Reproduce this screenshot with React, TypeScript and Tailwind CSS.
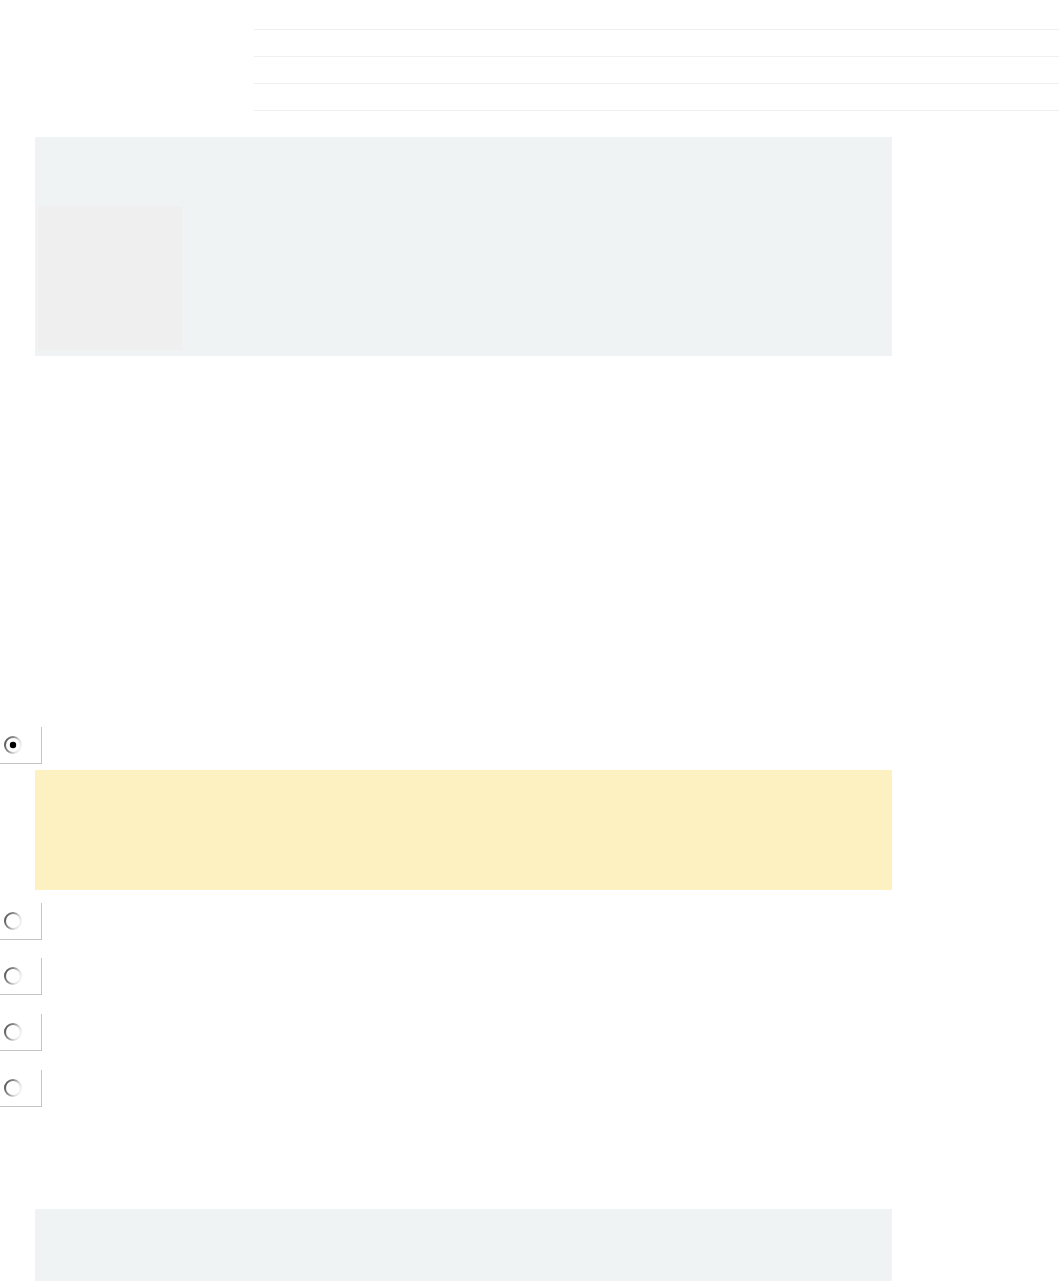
import React from "react";

function Radio({ checked, id }: { checked?: boolean; id: string }) {
  return (
    <svg width="20" height="20" viewBox="0 0 20 20" className="block">
      <defs>
        <linearGradient id={id} x1="0" y1="0.2" x2="1" y2="0.6">
          <stop offset="0" stopColor="#555555" />
          <stop offset="0.4" stopColor="#8c8c8c" />
          <stop offset="0.75" stopColor="#d8d8d8" />
          <stop offset="1" stopColor="#f2f2f2" />
        </linearGradient>
      </defs>
      <circle cx="10" cy="10" r="8" fill="#ffffff" stroke={`url(#${id})`} strokeWidth="2" />
      {checked && <circle cx="10" cy="10" r="3.2" fill="#000000" />}
    </svg>
  );
}

function RadioBox({ checked, id, className }: { checked?: boolean; id: string; className?: string }) {
  return (
    <div className={`w-[42px] h-[37px] border-r border-b border-[#c4c4c4] flex items-center pl-[3px] ${className ?? ""}`}>
      <Radio checked={checked} id={id} />
    </div>
  );
}

export default function App() {
  return (
    <div className="w-[1059px] h-[1281px] bg-white overflow-hidden font-['Liberation_Sans',sans-serif]">
      <div className="pt-[29px] pl-[254px]">
        <div className="h-[27px] border-t border-[#f0f0f0]" />
        <div className="h-[27px] border-t border-[#f0f0f0]" />
        <div className="h-[28px] border-t border-b border-[#f0f0f0]" />
      </div>

      <div className="ml-[35px] mt-[26px] w-[857px] h-[219px] bg-[#eff3f4] pl-[3px] pt-[69px]">
        <div className="w-[144px] h-[144px] bg-[#efefef]" />
      </div>

      <div className="mt-[371px]">
        <RadioBox checked id="r1" />
      </div>

      <div className="ml-[35px] mt-[6px] w-[857px] h-[120px] bg-[#fef1c1]" />

      <div className="mt-[13px] flex flex-col gap-[19px]">
        <RadioBox id="r2" />
        <RadioBox id="r3" className="-mt-[1px]" />
        <RadioBox id="r4" />
        <RadioBox id="r5" />
      </div>

      <div className="ml-[35px] mt-[102px] w-[857px] h-[80px] bg-[#eff3f4]" />
    </div>
  );
}
